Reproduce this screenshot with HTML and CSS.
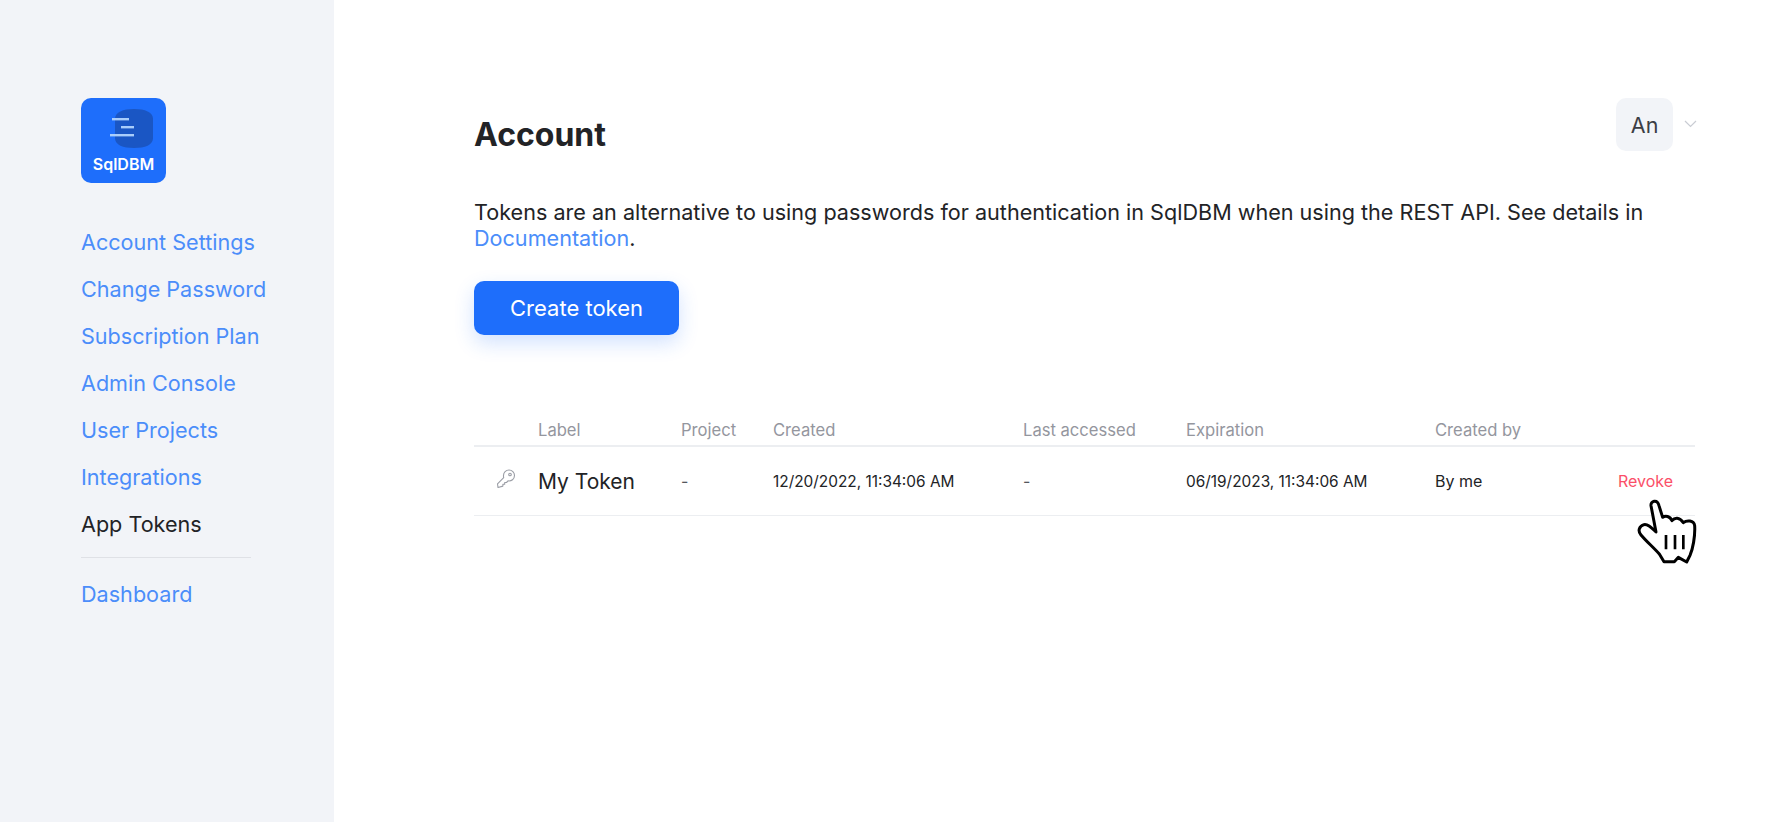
FILE: index.html
```html
<!DOCTYPE html>
<html lang="en">
<head>
    <meta charset="UTF-8">
    <title>Account - App Tokens</title>
    <link rel="stylesheet" href="styles.css">
</head>
<body>
    <aside class="sidebar">
        <div class="logo">
            <svg class="logo-mark" width="85" height="50" viewBox="0 0 85 50">
                <path d="M34 21c0-7 8-10 19-10s19 3 19 10v19c0 7-8 10-19 10s-19-3-19-10z" fill="#1a56c4"/>
                <rect x="31" y="20" width="17" height="2.4" fill="#a9cdfb"/>
                <rect x="40" y="28" width="13" height="2.4" fill="#a9cdfb"/>
                <rect x="29" y="36" width="24" height="2.4" fill="#a9cdfb"/>
            </svg>
            <span class="logo-text">SqlDBM</span>
        </div>
        <nav class="nav">
            <a class="nav-link">Account Settings</a>
            <a class="nav-link">Change Password</a>
            <a class="nav-link">Subscription Plan</a>
            <a class="nav-link">Admin Console</a>
            <a class="nav-link">User Projects</a>
            <a class="nav-link">Integrations</a>
            <a class="nav-link active">App Tokens</a>
            <div class="nav-divider"></div>
            <a class="nav-link">Dashboard</a>
        </nav>
    </aside>

    <main class="main">
        <div class="user-menu">
            <div class="avatar">An</div>
            <svg class="chevron" width="13" height="8" viewBox="0 0 13 8">
                <path d="M1 1l5.500 5.500L12 1" fill="none" stroke="#c9ccd3" stroke-width="1.2"/>
            </svg>
        </div>

        <h1 class="title">Account</h1>
        <p class="intro">Tokens are an alternative to using passwords for authentication in SqlDBM when using the REST API. See details in <a class="link">Documentation</a>.</p>
        <button class="button">Create token</button>

        <div class="tokens">
            <div class="row head">
                <span></span>
                <span>Label</span>
                <span>Project</span>
                <span>Created</span>
                <span>Last accessed</span>
                <span>Expiration</span>
                <span>Created by</span>
                <span></span>
            </div>
            <div class="row item">
                <svg class="key" width="20" height="20" viewBox="0 0 20 20">
                    <path d="M7.500 6.500a5.500 5.500 0 0 1 11 0 5.500 5.500 0 0 1-6.500 5.400l-1.500 1.600H8.700v1.800H6.900v1.800L2 18.500 1.500 14.800l6.200-6.200a5 5 0 0 1-.2-2.100z" fill="none" stroke="#9a9da5" stroke-width="1.1" stroke-linejoin="round"/>
                    <circle cx="14" cy="5.500" r="1.300" fill="none" stroke="#9a9da5" stroke-width="1.100"/>
                </svg>
                <span class="name">My Token</span>
                <span class="dash">-</span>
                <span class="date">12/20/2022, 11:34:06 AM</span>
                <span class="dash">-</span>
                <span class="date">06/19/2023, 11:34:06 AM</span>
                <span>By me</span>
                <a class="revoke">Revoke</a>
            </div>
        </div>

        <svg class="cursor" width="62" height="68" viewBox="168 174 186 204">
            <path d="M213 197C211 183 232 176 237 197L248 232C256 226 270 228 276 242C284 232 298 230 310 248C320 240 342 240 344 257C346 290 338 328 330 346L320 366L295 352L283 365H252L238 342C218 320 198 303 183 285C172 272 178 258 192 254C205 252 215 264 228 276Z" fill="#fff" stroke="#000" stroke-width="9" stroke-linejoin="round"/>
            <path d="M258 285V328M285 285V328M310 285V328" stroke="#000" stroke-width="8" fill="none"/>
        </svg>
    </main>
</body>
</html>
```

FILE: styles.css
```css
body {
    margin: 0;
    height: 100vh;
    display: flex;
    background: #fff;
    font-family: 'Inter', 'Liberation Sans', sans-serif;
    color: #222326;
    overflow: hidden;
}

.sidebar {
    width: 334px;
    flex: none;
    box-sizing: border-box;
    padding: 98px 0 0 81px;
    background: #f2f4f8;
}

.logo {
    width: 85px;
    height: 85px;
    border-radius: 10px;
    background: #1e6efb;
    display: flex;
    flex-direction: column;
    align-items: center;
    overflow: hidden;
}

.logo-mark {
    flex: none;
}

.logo-text {
    margin-top: 7px;
    font-size: 16px;
    font-weight: 600;
    line-height: 18px;
    color: #fff;
}

.nav {
    margin-top: 36px;
    width: 170px;
    display: flex;
    flex-direction: column;
}

.nav-link {
    height: 47px;
    line-height: 47px;
    font-size: 21.6px;
    white-space: nowrap;
    color: #4b8dfa;
}

.nav-link.active {
    color: #222326;
}

.nav-divider {
    height: 1px;
    margin: 9px 0 13px;
    background: #dfe1e6;
}

.main {
    flex: 1;
    position: relative;
    box-sizing: border-box;
    padding: 115px 85px 0 140px;
}

.user-menu {
    position: absolute;
    top: 98px;
    right: 83px;
    display: flex;
    align-items: flex-start;
    gap: 11px;
}

.avatar {
    width: 57px;
    height: 53px;
    border-radius: 10px;
    background: #f2f4f8;
    text-align: center;
    line-height: 55px;
    font-size: 21.5px;
    color: #3c3e44;
}

.chevron {
    margin-top: 22px;
}

.title {
    margin: 0;
    font-size: 32px;
    line-height: 40px;
    font-weight: 700;
    color: #222326;
}

.intro {
    margin: 44px 0 0;
    font-size: 21.6px;
    line-height: 26px;
    color: #222326;
}

.link {
    color: #4b8dfa;
}

.button {
    display: block;
    margin-top: 30px;
    width: 205px;
    height: 54px;
    border: none;
    border-radius: 10px;
    background: #1e6efb;
    color: #fff;
    font-family: inherit;
    font-size: 22px;
    box-shadow: 0 8px 20px rgba(30, 110, 251, 0.2);
}

.tokens {
    margin-top: 80px;
}

.row {
    display: grid;
    grid-template-columns: 64px 143px 92px 250px 163px 249px 183px 1fr;
    align-items: center;
}

.head {
    height: 30px;
    border-bottom: 2px solid #eceef1;
    font-size: 16.6px;
    color: #94969e;
}

.item {
    height: 68px;
    border-bottom: 1px solid #eceef1;
    font-size: 16px;
    color: #222326;
}

.key {
    margin: -4px 0 0 22px;
}

.name {
    font-size: 21px;
}

.date {
    font-size: 15.4px;
}

.dash {
    color: #55575d;
}

.revoke {
    font-size: 16px;
    color: #fb4f68;
    text-align: right;
    padding-right: 22px;
}

.cursor {
    position: absolute;
    left: 1302px;
    top: 498px;
}
```
